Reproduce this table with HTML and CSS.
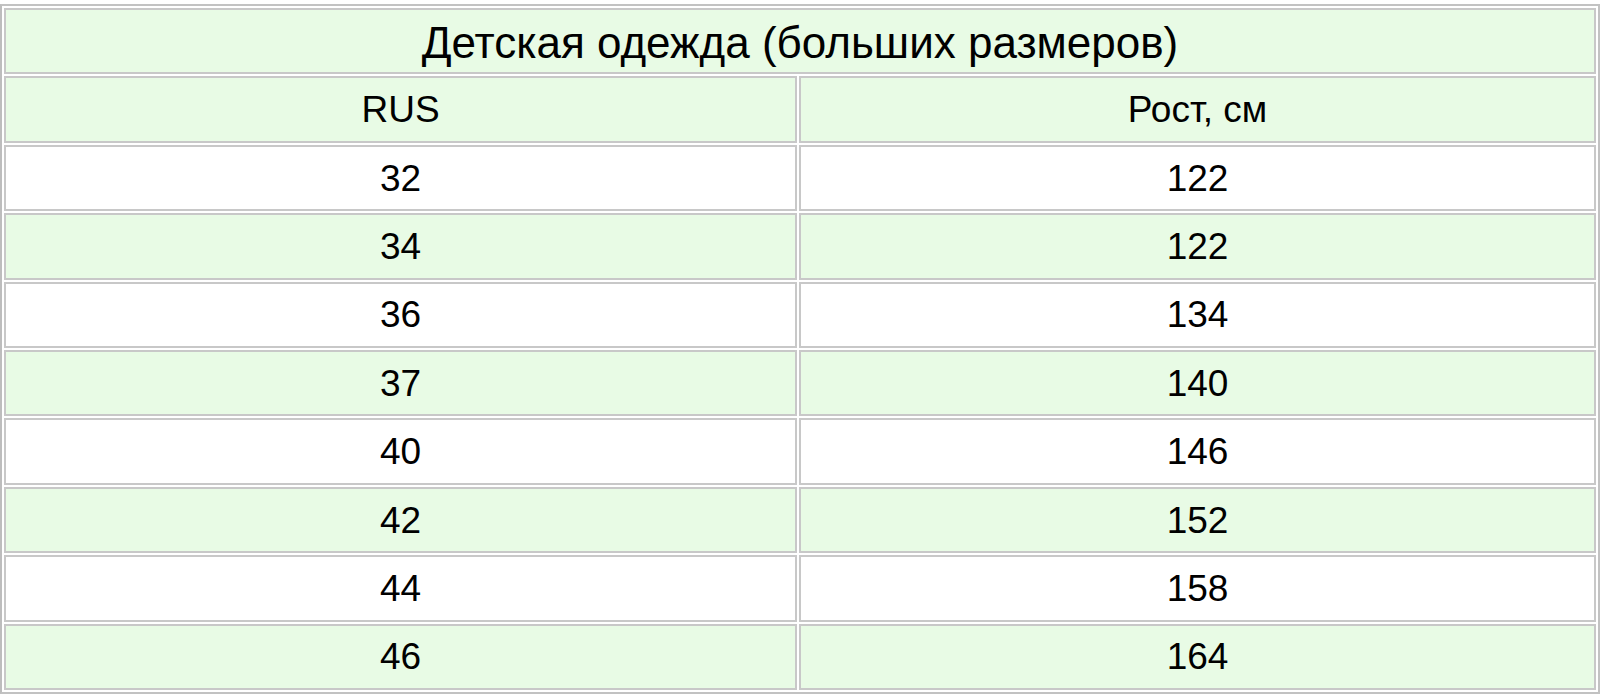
FILE: index.html
```html
<!DOCTYPE html>
<html lang="ru">
<head>
<meta charset="utf-8">
<title>Детская одежда (больших размеров)</title>
<link rel="stylesheet" href="styles.css">
</head>
<body>
<table class="sizes">
  <colgroup>
    <col class="c1">
    <col class="c2">
  </colgroup>
  <tr class="g"><td class="title" colspan="2">Детская одежда (больших размеров)</td></tr>
  <tr class="g"><td>RUS</td><td>Рост, см</td></tr>
  <tr class="w"><td>32</td><td>122</td></tr>
  <tr class="g"><td>34</td><td>122</td></tr>
  <tr class="w"><td>36</td><td>134</td></tr>
  <tr class="g"><td>37</td><td>140</td></tr>
  <tr class="w"><td>40</td><td>146</td></tr>
  <tr class="g"><td>42</td><td>152</td></tr>
  <tr class="w"><td>44</td><td>158</td></tr>
  <tr class="g"><td>46</td><td>164</td></tr>
</table>
</body>
</html>
```

FILE: styles.css
```css
html, body {
  margin: 0;
  padding: 0;
  background: #ffffff;
}
body {
  padding-top: 4px;
  font-family: "Liberation Sans", Arial, sans-serif;
  color: #000;
}
.sizes {
  width: 1600px;
  table-layout: fixed;
  border-collapse: separate;
  border-spacing: 2px;
  border: 2px solid #c2c2c2;
  border-left-color: #bdbdbd;
}
.c1 { width: 793px; }
.c2 { width: 797px; }
.sizes tr { height: 66.4px; }
.sizes td {
  box-sizing: border-box;
  border: 2px solid #c8c8c8;
  padding: 2px 0 0;
  text-align: center;
  vertical-align: middle;
  font-size: 37px;
  line-height: 1.15;
}
.sizes .title {
  font-size: 44px;
  padding-top: 4px;
}
.g td { background: #e8fbe5; }
.w td { background: #ffffff; }
```
